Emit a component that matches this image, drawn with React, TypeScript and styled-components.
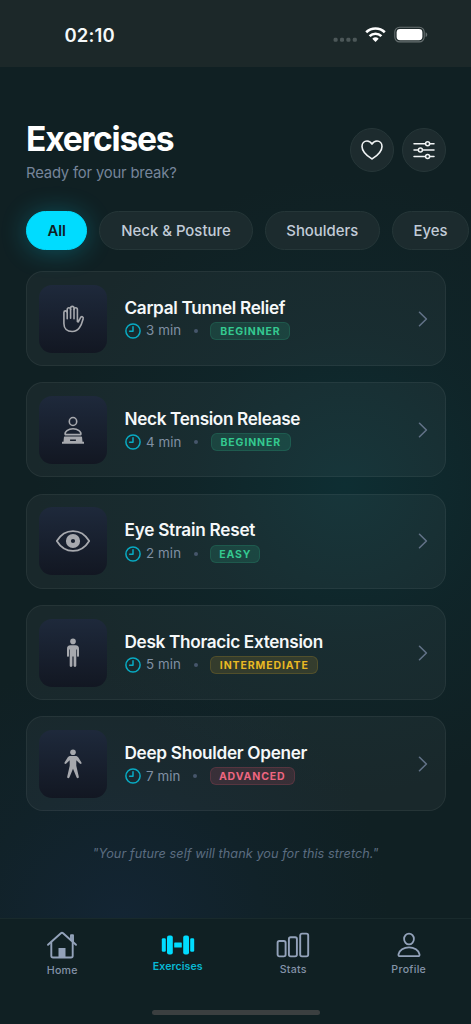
import React from 'react';
import styled, { createGlobalStyle } from 'styled-components';

const GlobalStyle = createGlobalStyle`
  * { box-sizing: border-box; }
  body { margin: 0; background: #102023; }
`;

const Screen = styled.div`
  width: 471px;
  height: 1024px;
  overflow: hidden;
  display: flex;
  flex-direction: column;
  font-family: Inter, 'Liberation Sans', sans-serif;
  color: #f5f8f9;
  background:
    radial-gradient(circle 310px at 345px 485px, rgba(13, 52, 57, 0.7), rgba(15, 44, 49, 0.4) 50%, rgba(16, 32, 35, 0)),
    radial-gradient(circle 270px at 120px 925px, rgba(20, 38, 55, 0.85), rgba(18, 36, 47, 0.45) 55%, rgba(16, 32, 35, 0)),
    #102023;
`;

const StatusBar = styled.div`
  flex: none;
  height: 66.5px;
  padding: 4px 43px 0 64.5px;
  display: flex;
  align-items: center;
  justify-content: space-between;
  background: #1c2829;
`;

const Time = styled.div`
  font-size: 18.5px;
  font-weight: 600;
  letter-spacing: 0.15px;
`;

const StatusIcons = styled.div`
  display: flex;
  align-items: center;
  gap: 8px;
`;

const Header = styled.header`
  flex: none;
  height: 128.5px;
  padding: 54px 25.5px 0 26px;
  display: flex;
  justify-content: space-between;
`;

const Title = styled.h1`
  margin: 0;
  font-size: 33.6px;
  line-height: 36px;
  font-weight: 700;
  letter-spacing: -1.25px;
  color: #fff;
`;

const Subtitle = styled.p`
  margin: 6px 0 0;
  font-size: 14.8px;
  line-height: 20px;
  letter-spacing: -0.17px;
  color: #76859a;
`;

const Actions = styled.div`
  display: flex;
  gap: 7.5px;
  padding-top: 7px;
`;

const RoundButton = styled.button`
  width: 44px;
  height: 44px;
  padding: 0;
  border-radius: 50%;
  border: 1px solid #263638;
  background: #1d2b2e;
  display: grid;
  place-items: center;
`;

const Filters = styled.nav`
  flex: none;
  height: 76px;
  padding: 16px 0 21px 26px;
  display: flex;
  gap: 12px;
`;

const Chip = styled.button<{ $width: number; $active?: boolean }>`
  flex: none;
  width: ${(p) => p.$width}px;
  height: 39px;
  padding: 0;
  border-radius: 20px;
  border: 1px solid ${(p) => (p.$active ? '#00dcff' : '#253638')};
  background: ${(p) => (p.$active ? '#00dcff' : '#1c2b2e')};
  color: ${(p) => (p.$active ? '#102023' : '#c2ccd8')};
  box-shadow: ${(p) => (p.$active ? '0 2px 26px rgba(0, 220, 255, 0.27)' : 'none')};
  font: ${(p) => (p.$active ? 600 : 500)} 14.9px Inter, 'Liberation Sans', sans-serif;
`;

const List = styled.main`
  flex: none;
  padding: 0 25.5px 0 26px;
  display: flex;
  flex-direction: column;
  gap: 16.35px;
`;

const Card = styled.article`
  height: 95px;
  padding: 0 16.8px 0 12px;
  border: 1px solid rgba(255, 255, 255, 0.055);
  border-radius: 17px;
  background: rgba(255, 255, 255, 0.04);
  display: flex;
  align-items: center;
`;

const Thumb = styled.div`
  width: 68px;
  height: 68px;
  border-radius: 13px;
  background: linear-gradient(#1e293b, #121722);
  display: grid;
  place-items: center;
  color: #a7a9ae;
`;

const Body = styled.div`
  flex: 1;
  margin-left: 17.5px;
`;

const Name = styled.h2<{ $spacing: number }>`
  margin: 0;
  font-size: 17.2px;
  line-height: 22px;
  font-weight: 600;
  letter-spacing: ${(p) => p.$spacing}px;
`;

const Meta = styled.div`
  margin-top: 2.8px;
  display: flex;
  align-items: center;
  font-size: 13.3px;
  line-height: 19px;
  color: #8090a4;
  white-space: nowrap;
`;

const Duration = styled.span`
  margin-left: 5.5px;
  letter-spacing: 0.1px;
`;

const Separator = styled.span`
  width: 4px;
  height: 4px;
  border-radius: 50%;
  margin: 0 12.5px;
  background: #46566b;
`;

const tones = {
  green: { fg: '#34c990', bg: 'rgba(52, 211, 153, 0.14)', line: 'rgba(52, 211, 153, 0.15)' },
  amber: { fg: '#eab923', bg: 'rgba(251, 191, 36, 0.12)', line: 'rgba(251, 191, 36, 0.15)' },
  red: { fg: '#ee6680', bg: 'rgba(251, 85, 113, 0.14)', line: 'rgba(251, 85, 113, 0.16)' },
};

const Badge = styled.span<{ $tone: keyof typeof tones; $width: number }>`
  width: ${(p) => p.$width}px;
  height: 18px;
  border: 1px solid ${(p) => tones[p.$tone].line};
  border-radius: 6px;
  background: ${(p) => tones[p.$tone].bg};
  color: ${(p) => tones[p.$tone].fg};
  font-size: 10.5px;
  line-height: 17px;
  font-weight: 700;
  letter-spacing: 0.88px;
  text-align: center;
  text-indent: 0.4px;
`;

const Quote = styled.p`
  flex: 1;
  margin: 0;
  padding-top: 33.5px;
  text-align: center;
  font-size: 12.7px;
  line-height: 18px;
  font-style: italic;
  letter-spacing: 0.05px;
  color: #5b6c80;
`;

const TabBar = styled.nav`
  flex: none;
  height: 106px;
  border-top: 1px solid #192a2c;
  background: #102023;
  display: flex;
  flex-direction: column;
  align-items: center;
`;

const Tabs = styled.div`
  width: 462px;
  height: 91px;
  display: grid;
  grid-template-columns: repeat(4, 1fr);
`;

const Tab = styled.div<{ $active?: boolean; $top: number; $gap?: number }>`
  display: flex;
  flex-direction: column;
  align-items: center;
  gap: ${(p) => p.$gap ?? 4}px;
  padding-top: ${(p) => p.$top}px;
  color: ${(p) => (p.$active ? '#00dcff' : '#93a2ba')};
`;

const TabLabel = styled.span<{ $active?: boolean }>`
  font-size: 10.6px;
  line-height: 14px;
  font-weight: ${(p) => (p.$active ? 600 : 500)};
  letter-spacing: ${(p) => (p.$active ? 0.05 : 0.3)}px;
  color: ${(p) => (p.$active ? '#08b9d4' : '#8493a8')};
`;

const HomeIndicator = styled.div`
  width: 168px;
  height: 5px;
  border-radius: 3px;
  background: #3b3f40;
`;

const SignalDots = () => (
  <svg width="24" height="18" viewBox="0 0 24 18" fill="#4c5758">
    {[0, 6.4, 12.8, 19.2].map((x) => (
      <rect key={x} x={x + 0.6} y="11.8" width="4" height="4" rx="1.4" />
    ))}
  </svg>
);

const Wifi = () => (
  <svg width="21" height="18" viewBox="0 0 21 18" fill="none" stroke="#fff" strokeWidth="2.6">
    <path d="M1.2 6.3a13.3 13.3 0 0 1 18.6 0" />
    <path d="M4.6 10.1a8.5 8.5 0 0 1 11.8 0" />
    <path d="M10.5 16.1 7.3 12.8a4.8 4.8 0 0 1 6.4 0z" fill="#fff" stroke="none" />
  </svg>
);

const Battery = () => (
  <svg width="34" height="18" viewBox="0 0 34 18">
    <rect x="0.8" y="1.3" width="29.4" height="14.6" rx="4.8" fill="none" stroke="#677071" strokeWidth="1.1" />
    <rect x="2.6" y="3" width="25.8" height="11.2" rx="3.4" fill="#fff" />
    <path d="M31.6 6.2c2.2.7 2.2 4.1 0 4.8z" fill="#677071" />
  </svg>
);

const Heart = () => (
  <svg width="24" height="24" viewBox="0 0 24 24" fill="none" stroke="#f1f4f5" strokeWidth="1.6" strokeLinejoin="round">
    <path d="M12 21C10.6 20.1 2 14.7 2 8.4 2 5.3 4.2 3 7 3c2.1 0 3.9 1.1 5 3.1C13.1 4.1 14.9 3 17 3c2.8 0 5 2.3 5 5.4 0 6.3-8.6 11.7-10 12.6z" />
  </svg>
);

const Sliders = () => (
  <svg width="24" height="24" viewBox="0 0 24 24" fill="none" stroke="#f1f4f5" strokeWidth="1.5" strokeLinecap="round">
    <path d="M2 5.7h11.2M18 5.7h4M2 12.1h4M10.8 12.1H22M2 18.4h11.2M18 18.4h4" />
    <circle cx="15.6" cy="5.7" r="2" />
    <circle cx="8.4" cy="12.1" r="2" />
    <circle cx="15.6" cy="18.4" r="2" />
  </svg>
);

const Hand = () => (
  <svg width="30" height="34" viewBox="-0.7 0.5 30 34" fill="none" stroke="currentColor" strokeWidth="1.6" strokeLinecap="round" strokeLinejoin="round">
    <path d="M5.2 22V11a1.6 1.6 0 0 1 3.3 0V8a1.7 1.7 0 0 1 3.4 0V6.6a1.7 1.7 0 0 1 3.4 0V8a1.7 1.7 0 0 1 3.4 0v12l.9.4 1.8-3.6c.6-1.3 1.4-1.9 2.3-1.6.9.3 1 1.2.7 2.3-1 3.8-2.3 7-3.7 8.8-1.6 2.3-3.8 3.7-7.3 3.7-5 0-8.2-3-8.2-8z" />
    <path d="M8.5 11v6.2M11.9 8v8.8M15.3 8v9.2" />
  </svg>
);

const PersonAtLaptop = () => (
  <svg width="30" height="34" viewBox="0 0 30 34" fill="none" stroke="currentColor" strokeWidth="1.6">
    <ellipse cx="15" cy="8.5" rx="3.7" ry="4" />
    <path d="M7.2 21.6c-.8-2.8 3-5.9 7.8-5.9s8.6 3.1 7.8 5.9z" strokeLinejoin="round" />
    <path fillRule="evenodd" stroke="none" fill="currentColor" d="M7 23.5h16c.7 0 1 .3 1.1 1l.4 4.3h1.5v1.9H4v-1.9h1.5l.4-4.3c.1-.7.4-1 1.1-1zM12.1 26.5v1.6h5.8v-1.6z" />
  </svg>
);

const Eye = () => (
  <svg width="36" height="34" viewBox="0 0 36 34">
    <path d="M1.8 17C5.7 10.6 11.4 7.1 18 7.1S30.3 10.6 34.2 17C30.3 23.4 24.6 26.9 18 26.9S5.7 23.4 1.8 17z" fill="none" stroke="currentColor" strokeWidth="1.8" strokeLinejoin="round" />
    <circle cx="18" cy="17" r="4.6" fill="none" stroke="currentColor" strokeWidth="5" />
  </svg>
);

const StandingFigure = () => (
  <svg width="30" height="34" viewBox="0 0 30 34" fill="currentColor">
    <circle cx="15" cy="5.4" r="2.8" />
    <path d="M12.5 9.3h5c2.5 0 3.5 1.3 3.5 3.6v6.6c0 .8-.3 1.3-1 1.3s-1-.5-1-1.3v-5.9h-.7v16c0 .8-.5 1.4-1.3 1.4s-1.4-.6-1.4-1.4v-9.1h-1.2v9.1c0 .8-.5 1.4-1.4 1.4s-1.3-.6-1.3-1.4v-16H11v5.9c0 .8-.3 1.3-1 1.3s-1-.5-1-1.3v-6.6c0-2.3 1-3.6 3.5-3.6z" />
  </svg>
);

const OpenFigure = () => (
  <svg width="30" height="34" viewBox="0 0 30 34" fill="currentColor">
    <circle cx="15" cy="5.2" r="2.8" />
    <path d="M12.6 9h4.8c1.2 0 2 .4 2.8 1.3l3.1 4.9c.9 1.4-.6 2.4-1.6 1.3l-3.4-3.3v5.6l2.5 10.9c.4 1.6-1.7 2.1-2.3.6L15 21.8l-3.5 8.5c-.6 1.5-2.7 1-2.3-.6l2.5-10.9v-5.6l-3.4 3.3c-1 1.1-2.5.1-1.6-1.3l3.1-4.9c.8-.9 1.6-1.3 2.8-1.3z" />
  </svg>
);

const Clock = () => (
  <svg width="16" height="16" viewBox="0 0 16 16" fill="none" stroke="#08abc3" strokeWidth="1.5" strokeLinecap="round" strokeLinejoin="round">
    <circle cx="8" cy="8" r="7.1" />
    <path d="M8 3.8V8.3H4.6" />
  </svg>
);

const Chevron = () => (
  <svg width="10" height="16" viewBox="0 0 10 16" fill="none" stroke="#627287" strokeWidth="1.6" strokeLinecap="round" strokeLinejoin="round">
    <path d="M1.5 1.3 8.4 8 1.5 14.7" />
  </svg>
);

const Home = () => (
  <svg width="32" height="30" viewBox="0 0 32 30" fill="none" stroke="currentColor" strokeWidth="1.9" strokeLinecap="round" strokeLinejoin="round">
    <path d="M2 14.8 14.9 3.2q1.1-1 2.2 0L30 14.8" />
    <path d="M5.3 12.5v13.2q0 1.8 1.8 1.8h17.8q1.8 0 1.8-1.8V12.5" />
    <path d="M25 10V5.2h2v6.5" />
    <path d="M12.5 27.5V18h7v9.5z" fill="currentColor" stroke="none" />
  </svg>
);

const Dumbbell = () => (
  <svg width="34" height="22" viewBox="0 0 34 22" fill="currentColor">
    <rect x="0.8" y="4.2" width="4" height="13.6" rx="1.3" />
    <rect x="6" y="1.5" width="5.8" height="19" rx="2" />
    <rect x="13.2" y="8.4" width="7.6" height="5.2" rx="0.6" />
    <rect x="22.2" y="1.5" width="5.8" height="19" rx="2" />
    <rect x="29.2" y="4.2" width="4" height="13.6" rx="1.3" />
  </svg>
);

const Bars = () => (
  <svg width="34" height="26" viewBox="0 0 34 26" fill="none" stroke="currentColor" strokeWidth="1.9">
    <rect x="1.6" y="9" width="8" height="15.4" rx="1.8" />
    <rect x="12.9" y="5.3" width="8" height="19.1" rx="1.8" />
    <rect x="24.2" y="1.6" width="8" height="22.8" rx="1.8" />
  </svg>
);

const Person = () => (
  <svg width="24" height="26" viewBox="0 0 24 26" fill="none" stroke="currentColor" strokeWidth="1.8" strokeLinejoin="round">
    <ellipse cx="12" cy="7" rx="4.9" ry="5.4" />
    <path d="M3 24.2c-1.2 0-1.8-.7-1.5-2C2.4 18.5 6.7 15.3 12 15.3s9.6 3.2 10.5 6.9c.3 1.3-.3 2-1.5 2z" />
  </svg>
);

type Exercise = {
  name: string;
  spacing: number;
  minutes: number;
  level: string;
  tone: keyof typeof tones;
  badgeWidth: number;
  Icon: React.FC;
};

const exercises: Exercise[] = [
  { name: 'Carpal Tunnel Relief', spacing: -0.3, minutes: 3, level: 'BEGINNER', tone: 'green', badgeWidth: 80, Icon: Hand },
  { name: 'Neck Tension Release', spacing: -0.36, minutes: 4, level: 'BEGINNER', tone: 'green', badgeWidth: 80, Icon: PersonAtLaptop },
  { name: 'Eye Strain Reset', spacing: -0.25, minutes: 2, level: 'EASY', tone: 'green', badgeWidth: 50, Icon: Eye },
  { name: 'Desk Thoracic Extension', spacing: -0.32, minutes: 5, level: 'INTERMEDIATE', tone: 'amber', badgeWidth: 108, Icon: StandingFigure },
  { name: 'Deep Shoulder Opener', spacing: -0.3, minutes: 7, level: 'ADVANCED', tone: 'red', badgeWidth: 85, Icon: OpenFigure },
];

export default function App() {
  return (
    <>
      <GlobalStyle />
      <Screen>
        <StatusBar>
          <Time>02:10</Time>
          <StatusIcons>
            <SignalDots />
            <Wifi />
            <Battery />
          </StatusIcons>
        </StatusBar>
        <Header>
          <div>
            <Title>Exercises</Title>
            <Subtitle>Ready for your break?</Subtitle>
          </div>
          <Actions>
            <RoundButton aria-label="Favourites"><Heart /></RoundButton>
            <RoundButton aria-label="Filter"><Sliders /></RoundButton>
          </Actions>
        </Header>
        <Filters>
          <Chip $width={61.4} $active>All</Chip>
          <Chip $width={153.2}>Neck &amp; Posture</Chip>
          <Chip $width={115.4}>Shoulders</Chip>
          <Chip $width={77}>Eyes</Chip>
        </Filters>
        <List>
          {exercises.map(({ name, spacing, minutes, level, tone, badgeWidth, Icon }) => (
            <Card key={name}>
              <Thumb><Icon /></Thumb>
              <Body>
                <Name $spacing={spacing}>{name}</Name>
                <Meta>
                  <Clock />
                  <Duration>{minutes} min</Duration>
                  <Separator />
                  <Badge $tone={tone} $width={badgeWidth}>{level}</Badge>
                </Meta>
              </Body>
              <Chevron />
            </Card>
          ))}
        </List>
        <Quote>"Your future self will thank you for this stretch."</Quote>
        <TabBar>
          <Tabs>
            <Tab $top={11}><Home /><TabLabel>Home</TabLabel></Tab>
            <Tab $top={15} $active><Dumbbell /><TabLabel $active>Exercises</TabLabel></Tab>
            <Tab $top={13} $gap={5}><Bars /><TabLabel>Stats</TabLabel></Tab>
            <Tab $top={13} $gap={5}><Person /><TabLabel>Profile</TabLabel></Tab>
          </Tabs>
          <HomeIndicator />
        </TabBar>
      </Screen>
    </>
  );
}
